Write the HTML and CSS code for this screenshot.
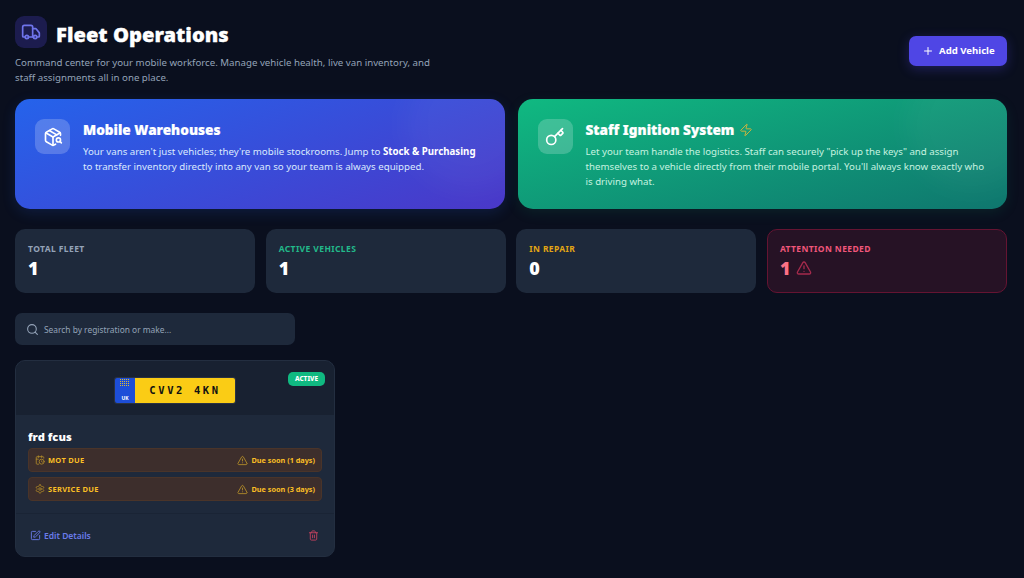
FILE: index.html
```html
<!DOCTYPE html>
<html lang="en">
<head>
  <meta charset="UTF-8">
  <title>Fleet Operations</title>
  <link rel="stylesheet" href="styles.css">
</head>
<body>
  <div class="page-header">
    <div>
      <div class="title-row">
        <div class="title-icon">
          <svg width="20" height="20" viewBox="0 0 24 24" class="ico"><path d="M14 18V6a2 2 0 0 0-2-2H4a2 2 0 0 0-2 2v11a1 1 0 0 0 1 1h2"/><path d="M15 18H9"/><path d="M19 18h2a1 1 0 0 0 1-1v-3.65a1 1 0 0 0-.22-.624l-3.48-4.35A1 1 0 0 0 17.52 8H14"/><circle cx="17" cy="18" r="2"/><circle cx="7" cy="18" r="2"/></svg>
        </div>
        <h1>Fleet Operations</h1>
      </div>
      <p class="subtitle">Command center for your mobile workforce. Manage vehicle health, live van inventory, and staff assignments all in one place.</p>
    </div>
    <button class="add-btn">
      <svg width="12" height="12" viewBox="0 0 24 24" class="ico"><path d="M5 12h14"/><path d="M12 5v14"/></svg>
      Add Vehicle
    </button>
  </div>

  <div class="hero-row">
    <div class="hero hero-blue">
      <div class="hero-icon">
        <svg width="20" height="20" viewBox="0 0 24 24" class="ico"><path d="M21 10V8a2 2 0 0 0-1-1.73l-7-4a2 2 0 0 0-2 0l-7 4A2 2 0 0 0 3 8v8a2 2 0 0 0 1 1.73l7 4a2 2 0 0 0 2 0l2-1.14"/><path d="m7.5 4.27 9 5.15"/><path d="M3.29 7 12 12l8.71-5"/><path d="M12 22V12"/><circle cx="18.5" cy="15.5" r="2.5"/><path d="M20.27 17.27 22 19"/></svg>
      </div>
      <div>
        <h2>Mobile Warehouses</h2>
        <p>Your vans aren't just vehicles; they're mobile stockrooms. Jump to <b>Stock &amp; Purchasing</b> to transfer inventory directly into any van so your team is always equipped.</p>
      </div>
    </div>
    <div class="hero hero-green">
      <div class="hero-icon">
        <svg width="20" height="20" viewBox="0 0 24 24" class="ico"><path d="m15.5 7.5 2.3 2.3a1 1 0 0 0 1.4 0l2.1-2.1a1 1 0 0 0 0-1.4L19 4"/><path d="m21 2-9.6 9.6"/><circle cx="7.5" cy="15.5" r="5.5"/></svg>
      </div>
      <div>
        <h2>Staff Ignition System
          <svg width="14" height="14" viewBox="0 0 24 24" class="ico zap"><path d="M4 14a1 1 0 0 1-.78-1.63l9.9-10.2a.5.5 0 0 1 .86.46l-1.92 6.02A1 1 0 0 0 13 10h7a1 1 0 0 1 .78 1.63l-9.9 10.2a.5.5 0 0 1-.86-.46l1.92-6.02A1 1 0 0 0 11 14z"/></svg>
        </h2>
        <p>Let your team handle the logistics. Staff can securely "pick up the keys" and assign themselves to a vehicle directly from their mobile portal. You'll always know exactly who is driving what.</p>
      </div>
    </div>
  </div>

  <div class="stats">
    <div class="stat">
      <div class="stat-label">TOTAL FLEET</div>
      <div class="stat-value">1</div>
    </div>
    <div class="stat">
      <div class="stat-label label-green">ACTIVE VEHICLES</div>
      <div class="stat-value">1</div>
    </div>
    <div class="stat">
      <div class="stat-label label-amber">IN REPAIR</div>
      <div class="stat-value">0</div>
    </div>
    <div class="stat stat-alert">
      <div class="stat-label label-red">ATTENTION NEEDED</div>
      <div class="stat-value value-red">1
        <svg width="16" height="16" viewBox="0 0 24 24" class="ico alert-ico"><path d="m21.73 18-8-14a2 2 0 0 0-3.48 0l-8 14A2 2 0 0 0 4 21h16a2 2 0 0 0 1.73-3"/><path d="M12 9v4"/><path d="M12 17h.01"/></svg>
      </div>
    </div>
  </div>

  <div class="search">
    <svg width="13" height="13" viewBox="0 0 24 24" class="ico"><path d="m21 21-4.34-4.34"/><circle cx="11" cy="11" r="8"/></svg>
    <span>Search by registration or make...</span>
  </div>

  <div class="van-card">
    <div class="van-top">
      <div class="plate">
        <div class="plate-side">
          <div class="stars"></div>
          <div class="uk">UK</div>
        </div>
        <div class="plate-reg">CVV2 4KN</div>
      </div>
      <span class="badge">ACTIVE</span>
    </div>
    <div class="van-body">
      <div class="van-name">frd fcus</div>
      <div class="due-row">
        <span class="due-left">
          <svg width="10" height="10" viewBox="0 0 24 24" class="ico dim"><path d="M16 14v2.2l1.6 1"/><path d="M16 2v4"/><path d="M21 7.5V6a2 2 0 0 0-2-2H5a2 2 0 0 0-2 2v14a2 2 0 0 0 2 2h3.5"/><path d="M3 10h5"/><path d="M8 2v4"/><circle cx="16" cy="16" r="6"/></svg>
          MOT DUE
        </span>
        <span class="due-right">
          <svg width="11" height="11" viewBox="0 0 24 24" class="ico dim"><path d="m21.73 18-8-14a2 2 0 0 0-3.48 0l-8 14A2 2 0 0 0 4 21h16a2 2 0 0 0 1.73-3"/><path d="M12 9v4"/><path d="M12 17h.01"/></svg>
          Due soon (1 days)
        </span>
      </div>
      <div class="due-row">
        <span class="due-left">
          <svg width="10" height="10" viewBox="0 0 24 24" class="ico dim"><path d="M12.22 2h-.44a2 2 0 0 0-2 2v.18a2 2 0 0 1-1 1.73l-.43.25a2 2 0 0 1-2 0l-.15-.08a2 2 0 0 0-2.73.73l-.22.38a2 2 0 0 0 .73 2.73l.15.1a2 2 0 0 1 1 1.72v.51a2 2 0 0 1-1 1.74l-.15.09a2 2 0 0 0-.73 2.73l.22.38a2 2 0 0 0 2.73.73l.15-.08a2 2 0 0 1 2 0l.43.25a2 2 0 0 1 1 1.73V20a2 2 0 0 0 2 2h.44a2 2 0 0 0 2-2v-.18a2 2 0 0 1 1-1.73l.43-.25a2 2 0 0 1 2 0l.15.08a2 2 0 0 0 2.73-.73l.22-.39a2 2 0 0 0-.73-2.73l-.15-.08a2 2 0 0 1-1-1.74v-.5a2 2 0 0 1 1-1.74l.15-.09a2 2 0 0 0 .73-2.73l-.22-.38a2 2 0 0 0-2.73-.73l-.15.08a2 2 0 0 1-2 0l-.43-.25a2 2 0 0 1-1-1.73V4a2 2 0 0 0-2-2z"/><circle cx="12" cy="12" r="3"/></svg>
          SERVICE DUE
        </span>
        <span class="due-right">
          <svg width="11" height="11" viewBox="0 0 24 24" class="ico dim"><path d="m21.73 18-8-14a2 2 0 0 0-3.48 0l-8 14A2 2 0 0 0 4 21h16a2 2 0 0 0 1.73-3"/><path d="M12 9v4"/><path d="M12 17h.01"/></svg>
          Due soon (3 days)
        </span>
      </div>
    </div>
    <div class="van-foot">
      <a class="edit" href="#">
        <svg width="11" height="11" viewBox="0 0 24 24" class="ico"><path d="M12 3H5a2 2 0 0 0-2 2v14a2 2 0 0 0 2 2h14a2 2 0 0 0 2-2v-7"/><path d="M18.375 2.625a1 1 0 0 1 3 3l-9.013 9.014a2 2 0 0 1-.853.505l-2.873.84a.5.5 0 0 1-.62-.62l.84-2.873a2 2 0 0 1 .506-.852z"/></svg>
        Edit Details
      </a>
      <svg width="11" height="11" viewBox="0 0 24 24" class="ico trash"><path d="M3 6h18"/><path d="M19 6v14c0 1-1 2-2 2H7c-1 0-2-1-2-2V6"/><path d="M8 6V4c0-1 1-2 2-2h4c1 0 2 1 2 2v2"/><path d="M10 11v6"/><path d="M14 11v6"/></svg>
    </div>
  </div>
</body>
</html>
```

FILE: styles.css
```css
html, body {
  margin: 0;
  height: 578px;
  overflow: hidden;
}
body {
  background-color: #0a0f1e;
  font-family: 'Noto Sans', sans-serif;
  color: #fff;
  padding: 16px 17px 0 15px;
  box-sizing: border-box;
}
.ico {
  fill: none;
  stroke: currentColor;
  stroke-width: 2;
  stroke-linecap: round;
  stroke-linejoin: round;
  flex-shrink: 0;
}

.page-header {
  display: flex;
  justify-content: space-between;
  align-items: center;
}
.title-row {
  display: flex;
  align-items: center;
  gap: 9px;
}
.title-icon {
  width: 32px;
  height: 32px;
  border-radius: 9px;
  background-color: #1c1c4e;
  color: #6f74ec;
  display: flex;
  align-items: center;
  justify-content: center;
}
h1 {
  margin: 0;
  padding-top: 4px;
  font-size: 20.2px;
  font-weight: 900;
  line-height: 28px;
  -webkit-text-stroke: 0.3px #fff;
}
.subtitle {
  margin: 7px 0 0;
  width: 420px;
  font-size: 9.7px;
  line-height: 15px;
  color: #94a3b8;
}
.add-btn {
  display: flex;
  align-items: center;
  gap: 5px;
  height: 30px;
  width: 98px;
  padding: 0 0 0 13px;
  border: none;
  border-radius: 7px;
  background-color: #4f46e5;
  color: #fff;
  font-family: inherit;
  font-size: 9.6px;
  font-weight: 700;
  box-shadow: 0 3px 12px rgba(79,70,229,0.3);
}

.hero-row {
  display: grid;
  grid-template-columns: 1fr 1fr;
  gap: 13px;
  margin-top: 14px;
}
.hero {
  position: relative;
  overflow: hidden;
  display: flex;
  gap: 13px;
  height: 110px;
  box-sizing: border-box;
  padding: 20px;
  border-radius: 15px;
}
.hero::after {
  content: "";
  position: absolute;
  top: -40px;
  right: -30px;
  width: 130px;
  height: 130px;
  border-radius: 50%;
  background-color: rgba(255,255,255,0.04);
  filter: blur(14px);
}
.hero-blue {
  background: linear-gradient(160deg, #2563eb, #4a38c8);
  box-shadow: 0 4px 14px rgba(37,99,235,0.16);
}
.hero-green {
  background: linear-gradient(165deg, #10b981, #0f766e);
  box-shadow: 0 4px 14px rgba(16,185,129,0.1);
}
.hero-icon {
  width: 35px;
  height: 35px;
  border-radius: 9px;
  background-color: rgba(255,255,255,0.2);
  display: flex;
  align-items: center;
  justify-content: center;
  flex-shrink: 0;
}
.hero h2 {
  margin: 1px 0 5px;
  font-size: 13.6px;
  font-weight: 900;
  line-height: 19px;
  display: flex;
  align-items: center;
  gap: 5px;
  -webkit-text-stroke: 0.2px #fff;
}
.zap {
  color: #d6b53c;
  stroke-width: 1.6;
}
.hero p {
  margin: 0;
  font-size: 9.7px;
  line-height: 15px;
  position: relative;
  z-index: 1;
}
.hero-blue p {
  color: #dbeafe;
}
.hero-green p {
  color: #c6f3e0;
}
.hero b {
  color: #fff;
}

.stats {
  display: grid;
  grid-template-columns: repeat(4, 1fr);
  gap: 10.5px;
  margin-top: 20px;
}
.stat {
  height: 64px;
  box-sizing: border-box;
  padding: 14px 13px 0;
  border-radius: 10px;
  background-color: #1e293b;
}
.stat-alert {
  background-color: #261225;
  border: 1px solid #651432;
  padding: 13px 12px 0;
}
.stat-label {
  font-size: 8.5px;
  font-weight: 700;
  letter-spacing: 0.4px;
  line-height: 12px;
  color: #94a3b8;
}
.label-green { color: #22b98a; }
.label-amber { color: #e3a514; }
.label-red { color: #f0567a; }
.stat-value {
  display: flex;
  align-items: center;
  gap: 6px;
  margin-top: 1px;
  font-size: 18px;
  font-weight: 900;
  line-height: 25px;
}
.value-red {
  color: #fb7185;
}
.alert-ico {
  color: #a52a4c;
  margin-top: -1px;
}

.search {
  display: flex;
  align-items: center;
  gap: 5px;
  width: 280px;
  height: 32px;
  box-sizing: border-box;
  margin-top: 20px;
  padding-left: 11px;
  border-radius: 7px;
  background-color: #1e293b;
  color: #94a3b8;
  font-size: 8.4px;
}

.van-card {
  width: 320px;
  height: 197px;
  box-sizing: border-box;
  margin-top: 15px;
  border: 1px solid #232e40;
  border-radius: 10px;
  background-color: #1e293b;
  overflow: hidden;
  display: flex;
  flex-direction: column;
}
.van-top {
  position: relative;
  height: 54px;
  flex-shrink: 0;
  background-color: #182131;
  display: flex;
  align-items: center;
  justify-content: center;
  padding-top: 5px;
  box-sizing: border-box;
}
.plate {
  display: flex;
  width: 120px;
  height: 25px;
  border-radius: 2px;
  overflow: hidden;
  box-shadow: 0 0 0 1px #2a3242;
}
.plate-side {
  width: 20px;
  background-color: #1d4ed8;
  display: flex;
  flex-direction: column;
  align-items: center;
  justify-content: space-between;
  padding: 1px 0 1px;
  box-sizing: border-box;
}
.stars {
  width: 10px;
  height: 8px;
  background-image:
    linear-gradient(to right, transparent 50%, #1d4ed8 50%),
    linear-gradient(#e0bd35 50%, #1d4ed8 50%);
  background-size: 2px 2px;
}
.uk {
  font-size: 5px;
  font-weight: 700;
  line-height: 7px;
}
.plate-reg {
  flex: 1;
  background-color: #facc15;
  color: #111;
  font-family: 'DejaVu Sans Mono', monospace;
  font-size: 10.5px;
  font-weight: 700;
  letter-spacing: 2.6px;
  line-height: 25px;
  text-align: center;
}
.badge {
  position: absolute;
  top: 11px;
  right: 9px;
  height: 14px;
  width: 37px;
  border-radius: 5px;
  background-color: #10b981;
  font-size: 6.5px;
  font-weight: 800;
  line-height: 14px;
  text-align: center;
}
.van-body {
  flex: 1;
  padding: 15px 12px 0;
  border-bottom: 1px solid #1a2435;
}
.van-name {
  font-size: 11.2px;
  font-weight: 900;
  line-height: 14px;
  margin-bottom: 4px;
}
.due-row {
  display: flex;
  justify-content: space-between;
  align-items: center;
  height: 24px;
  box-sizing: border-box;
  padding: 0 6px;
  margin-bottom: 5px;
  border-radius: 4px;
  background-color: #3d2e2c;
  border: 1px solid #4a3429;
  color: #fbbf24;
}
.due-left, .due-right {
  display: flex;
  align-items: center;
  font-weight: 700;
}
.due-left {
  gap: 3px;
  font-size: 7.5px;
  letter-spacing: 0.3px;
}
.due-right {
  gap: 3px;
  font-size: 7.3px;
}
.dim {
  color: #b08a2a;
}
.van-foot {
  height: 42px;
  flex-shrink: 0;
  display: flex;
  justify-content: space-between;
  align-items: center;
  padding: 0 15px 0 14px;
}
.edit {
  display: flex;
  align-items: center;
  gap: 3px;
  color: #6a7bea;
  font-size: 8.5px;
  font-weight: 600;
  text-decoration: none;
}
.trash {
  color: #c2415e;
}
```
